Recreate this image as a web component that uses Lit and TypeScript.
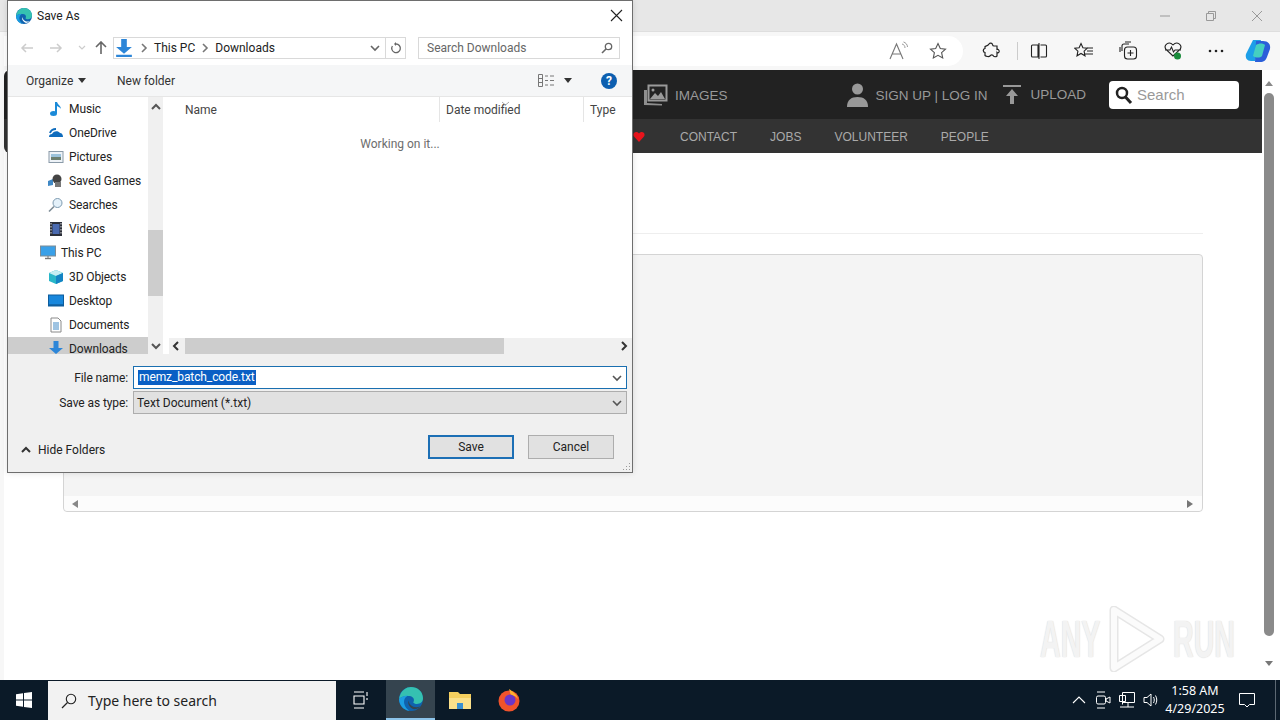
import { LitElement, css, html, svg } from 'lit';
import { customElement } from 'lit/decorators.js';

const chevron = (rot: number, color = '#555', weight = 1.6) => html`<svg width="10" height="10" viewBox="0 0 10 10" style="transform:rotate(${rot}deg)"><path d="M1 3l4 4 4-4" fill="none" stroke=${color} stroke-width=${weight}/></svg>`;

const edge = (size: number, hole: string) => html`<svg width=${size} height=${size} viewBox="0 0 16 16"><circle cx="8" cy="8" r="8" fill="#0f62ae"/><path d="M0 8C1 2 5 0 8 0c4.500 0 8 3.200 8 7.500 0 2.500-2 3.800-4 3.800-1.200 0-2.200-.4-2.500-1 1-1.500.5-4-2.500-4.300C4 5.700 1.500 6.500 0 8z" fill="#35c1b1"/><path d="M0 8c1.500-1.500 4-2.300 6-2.300-2 1-3 3-2.500 5.500.4 2 2 3.800 3.500 4.700C3 15.500 0 12 0 8z" fill="#1b9de2"/><path d="M6.500 9c0 2.500 2.300 4.500 5 4.500 1 0 1.800-.2 2.500-.6l-1 1.100c-1 .5-2 .8-3 .9C7.500 14 5.300 11.500 6.500 9z" fill=${hole}/></svg>`;

const treeIcons: Record<string, unknown> = {
  music: svg`<path d="M8 1v11" stroke="#1b8ad8" stroke-width="2"/><ellipse cx="5.500" cy="12.500" rx="3.500" ry="2.500" fill="#1b8ad8"/><path d="M9 1c1 3 4 4 4 7-1-2-3-2-4-3z" fill="#1b8ad8"/>`,
  cloud: svg`<path d="M1 12c0-2 1-3 3-3 1-3 6-4 8-1 2 0 3 2 3 4z" fill="#0f6cbd"/><path d="M2 8c1-3 3-4 6-4" stroke="#0f6cbd" stroke-width="2" fill="none"/>`,
  pictures: svg`<rect x="1" y="2.500" width="14" height="11" fill="#eef3f8" stroke="#8a9aa8"/><rect x="3" y="5" width="10" height="3" fill="#9cc3dc"/><rect x="3" y="8" width="10" height="3" fill="#6c7f70"/>`,
  games: svg`<path d="M0 8l5-2v6l-5 1z" fill="#3f88c5"/><circle cx="9" cy="6" r="4.500" fill="#444"/><path d="M7 9h6v5H7z" fill="#777"/>`,
  search: svg`<circle cx="9.500" cy="6" r="4.500" fill="#e4f1fa" stroke="#7d9ab0"/><path d="M6 9.500L1 14.500" stroke="#7d8c96" stroke-width="1.600"/>`,
  video: svg`<rect x="2" y="1" width="12" height="14" fill="#2b2f3a"/><rect x="4.500" y="3" width="7" height="10" fill="#4a6ab0"/><path d="M3 2v12M13 2v12" stroke="#ddd" stroke-dasharray="1.500 1.500"/>`,
  pc: svg`<rect x="0.500" y="1" width="15" height="10" fill="#3aa0e8" stroke="#7d8c96"/><path d="M5 13.500h6" stroke="#777" stroke-width="1.400"/><path d="M8 11v2" stroke="#777"/>`,
  cube: svg`<path d="M8 1l7 3v8l-7 3-7-3V4z" fill="#28b6c8"/><path d="M1 4l7 3 7-3-7-3z" fill="#c5eef3"/><path d="M8 7v8l7-3V4z" fill="#1484c4"/>`,
  desktop: svg`<rect x="0.500" y="2" width="15" height="11" fill="#1887dc" stroke="#0d5c9c"/><path d="M1 12h14" stroke="#0d4a80"/>`,
  docs: svg`<path d="M3 1h7l3 3v11H3z" fill="#fff" stroke="#8a8a8a"/><path d="M5 6h6M5 8h6M5 10h6M5 12h6" stroke="#3f88c5"/>`,
  down: svg`<path d="M5.500 0h5v7h4.500L8 13 1 7h4.500z" fill="#2d86d8"/><path d="M1 14h14v2H1z" fill="#2d86d8"/>`,
};

const tree = [
  ['Music', 'music', 1], ['OneDrive', 'cloud', 1], ['Pictures', 'pictures', 1], ['Saved Games', 'games', 1],
  ['Searches', 'search', 1], ['Videos', 'video', 1], ['This PC', 'pc', 0], ['3D Objects', 'cube', 1],
  ['Desktop', 'desktop', 1], ['Documents', 'docs', 1], ['Downloads', 'down', 1],
] as const;

@customElement('save-dialog')
class SaveDialog extends LitElement {
  static styles = css`
    :host {
      position: absolute; left: 7px; top: 0; width: 626px; height: 473px; box-sizing: border-box;
      border: 1px solid #6e6e6e; background: #fff; display: flex; flex-direction: column;
      font: 12px Roboto, 'Noto Sans', sans-serif; color: #222; box-shadow: 0 0 6px rgba(0,0,0,.12);
    }
    .title { height: 29px; display: flex; align-items: center; padding-left: 8px; gap: 5px; flex: none; }
    .title .x { margin-left: auto; margin-right: 9px; display: flex; }
    .nav { height: 35px; flex: none; display: flex; align-items: center; box-sizing: border-box; padding: 0 12px; color: #bbb; }
    .nav .arrows { display: flex; align-items: center; width: 94px; gap: 15px; }
    .nav .arrows .up { margin-left: -6px; }
    .addr { width: 270px; height: 20px; border: 1px solid #d9d9d9; display: flex; align-items: center; gap: 5px; padding-left: 1px; box-sizing: content-box; color: #222; flex: none; }
    .addr .loc { margin-right: 1px; }
    .addr .end { margin-left: auto; margin-right: 5px; display: flex; align-items: center; }
    .refresh { width: 19px; height: 20px; border: 1px solid #d9d9d9; display: flex; align-items: center; justify-content: center; margin-left: -1px; flex: none; }
    .search { margin-left: 12px; width: 186px; height: 20px; border: 1px solid #d9d9d9; display: flex; align-items: center; padding: 0 6px 0 8px; color: #666; justify-content: space-between; flex: none; }
    .tools { height: 32px; flex: none; background: #f5f6f7; border-bottom: 1px solid #e6e6e6; display: flex; align-items: center; padding: 0 15px 0 18px; color: #333; box-sizing: border-box; }
    .tools .org { display: flex; align-items: center; gap: 5px; width: 91px; }
    .caret { width: 0; height: 0; border: 4px solid transparent; border-top: 5px solid #333; border-bottom: 0; }
    .tools .right { margin-left: auto; display: flex; align-items: center; }
    .tools .right .caret { margin-left: 9px; }
    .help { width: 16px; height: 16px; border-radius: 50%; background: #0d5fb0; color: #fff; font-weight: 700; font-size: 12px; line-height: 16px; text-align: center; margin-left: 29px; }
    .panes { height: 257px; flex: none; display: flex; }
    .tree { width: 140px; overflow: hidden; flex: none; }
    .row { height: 24px; display: flex; align-items: center; gap: 5px; padding-left: 40px; box-sizing: border-box; white-space: nowrap; letter-spacing: -.1px; }
    .row.top { padding-left: 32px; }
    .row.sel { background: #cdcdcd; }
    .row svg { flex: none; }
    .vbar { width: 15px; flex: none; background: #f0f0f0; display: flex; flex-direction: column; align-items: center; position: relative; justify-content: space-between; padding: 5px 0 3px; box-sizing: border-box; }
    .vbar .thumb { position: absolute; left: 0; right: 0; top: 133px; height: 66px; background: #cdcdcd; }
    .list { flex: 1; display: flex; flex-direction: column; min-width: 0; padding-left: 7px; }
    .head { height: 25px; flex: none; display: flex; color: #444; }
    .head div { box-sizing: border-box; padding: 6px 0 0 6px; border-right: 1px solid #e5e5e5; position: relative; }
    .head .n { width: 270px; padding-left: 15px; }
    .head .d { width: 144px; }
    .head .t { border-right: 0; flex: 1; }
    .head .sort { position: absolute; top: -2px; left: 61px; padding: 0; border: 0; }
    .work { flex: 1; text-align: center; color: #6d6d6d; padding: 15px 2px 0 0; }
    .hbar { height: 16px; flex: none; margin-left: -1px; background: #f0f0f0; display: flex; align-items: center; justify-content: space-between; padding: 0 3px 0 2px; position: relative; }
    .hbar .thumb { position: absolute; left: 16px; width: 319px; top: 0; bottom: 0; background: #cdcdcd; }
    .hbar span { display: flex; }
    .bottom { flex: 1; background: #f0f0f0; padding: 12px 5px 0 0; position: relative; }
    .field { display: grid; grid-template-columns: 120px 494px; column-gap: 5px; align-items: center; margin-bottom: 2px; }
    .field label { text-align: right; letter-spacing: -.1px; }
    .input { height: 23px; box-sizing: border-box; border: 1px solid #1a6fb0; background: #fff; display: flex; align-items: center; justify-content: space-between; padding: 0 4px; }
    .input.sel { border-color: #adadad; background: #e1e1e1; padding-left: 3px; }
    .input mark { background: #0a5fc4; color: #fff; padding: 0 1px; line-height: 15px; letter-spacing: -.1px; }
    .actions { display: flex; align-items: center; margin-top: 21px; padding-left: 13px; }
    .hide { display: flex; align-items: center; gap: 7px; margin-top: 5px; }
    .btn { width: 86px; height: 24px; box-sizing: border-box; border: 1px solid #adadad; background: #e1e1e1; display: flex; align-items: center; justify-content: center; }
    .btn.def { border: 2px solid #1c6fb5; margin-left: auto; margin-right: 14px; }
    .btn.cancel { margin-right: 13px; }
    .grip { position: absolute; right: 1px; bottom: 1px; }
  `;

  render() {
    return html`
      <div class="title">
        ${edge(16, '#fff')}
        <span>Save As</span>
        <span class="x"><svg width="13" height="13" viewBox="0 0 13 13"><path d="M1 1l11 11M12 1L1 12" stroke="#222" stroke-width="1.100"/></svg></span>
      </div>
      <div class="nav">
        <div class="arrows">
          <svg width="14" height="12" viewBox="0 0 14 12"><path d="M13 6H2M6 2L2 6l4 4" fill="none" stroke="#ccc" stroke-width="1.500"/></svg>
          <svg width="14" height="12" viewBox="0 0 14 12"><path d="M1 6h11M8 2l4 4-4 4" fill="none" stroke="#ccc" stroke-width="1.500"/></svg>
          <svg width="8" height="6" viewBox="0 0 8 6"><path d="M1 1l3 3 3-3" fill="none" stroke="#ccc" stroke-width="1.200"/></svg>
          <svg class="up" width="12" height="13" viewBox="0 0 12 13"><path d="M6 13V2M1 6l5-5 5 5" fill="none" stroke="#666" stroke-width="1.600"/></svg>
        </div>
        <div class="addr">
          <svg class="loc" width="18" height="18" viewBox="0 0 16 16"><path d="M5.500 0h5v7h4.500L8 13 1 7h4.500z" fill="#2d86d8"/><path d="M1 14h14v2H1z" fill="#2d86d8"/></svg>
          ${chevron(-90, '#777')}<span>This PC</span>${chevron(-90, '#777')}<span>Downloads</span>
          <span class="end">${chevron(0, '#666')}</span>
        </div>
        <div class="refresh"><svg width="12" height="12" viewBox="0 0 12 12"><path d="M6 2a4.300 4.300 0 1 1-3.600 2" fill="none" stroke="#666" stroke-width="1.300"/><path d="M6 0v4L4 2z" fill="#666"/></svg></div>
        <div class="search"><span>Search Downloads</span><svg width="12" height="12" viewBox="0 0 12 12"><circle cx="7.500" cy="4.500" r="3.200" fill="none" stroke="#666" stroke-width="1.300"/><path d="M5 7l-4 4" stroke="#666" stroke-width="1.600"/></svg></div>
      </div>
      <div class="tools">
        <div class="org"><span>Organize</span><i class="caret"></i></div>
        <span>New folder</span>
        <div class="right">
          <svg width="17" height="13" viewBox="0 0 17 13"><path d="M.5.5h4v12h-4zM.5 4.500h4M.5 8.500h4M7 2h3M12 2h4M7 6.500h3M12 6.500h4M7 11h3M12 11h4" fill="none" stroke="#777"/></svg>
          <i class="caret"></i>
          <div class="help">?</div>
        </div>
      </div>
      <div class="panes">
        <div class="tree">
          ${tree.map(([name, icon, indent]) => html`<div class="row ${indent ? '' : 'top'} ${name === 'Downloads' ? 'sel' : ''}"><svg width="16" height="16" viewBox="0 0 16 16">${treeIcons[icon]}</svg><span>${name}</span></div>`)}
        </div>
        <div class="vbar">${chevron(180, '#555', 2)}<div class="thumb"></div>${chevron(0, '#555', 2)}</div>
        <div class="list">
          <div class="head">
            <div class="n">Name</div>
            <div class="d">Date modified<div class="sort"><svg width="9" height="5" viewBox="0 0 9 5"><path d="M1 1l3.500 3L8 1" fill="none" stroke="#aaa"/></svg></div></div>
            <div class="t">Type</div>
          </div>
          <div class="work">Working on it...</div>
          <div class="hbar"><span>${chevron(90, '#333', 2)}</span><div class="thumb"></div><span>${chevron(-90, '#333', 2)}</span></div>
        </div>
      </div>
      <div class="bottom">
        <div class="field"><label>File name:</label><div class="input"><mark>memz_batch_code.txt</mark>${chevron(0)}</div></div>
        <div class="field"><label>Save as type:</label><div class="input sel"><span>Text Document (*.txt)</span>${chevron(0)}</div></div>
        <div class="actions">
          <div class="hide">${chevron(180, '#333', 2)}<span>Hide Folders</span></div>
          <div class="btn def">Save</div>
          <div class="btn cancel">Cancel</div>
        </div>
        <svg class="grip" width="9" height="9" viewBox="0 0 9 9"><path d="M7 1h1v1H7zM4 4h1v1H4zM7 4h1v1H7zM1 7h1v1H1zM4 7h1v1H4zM7 7h1v1H7z" fill="#9a9a9a"/></svg>
      </div>
    `;
  }
}

@customElement('app-root')
export class AppRoot extends LitElement {
  static styles = css`
    :host { display: flex; flex-direction: column; position: relative; width: 1280px; height: 720px; overflow: hidden; font-family: 'Liberation Sans', Arial, sans-serif; background: #fff; }
    .browser { height: 680px; flex: none; display: flex; flex-direction: column; background: #f7f7f7; }
    .titlebar { height: 32px; flex: none; box-sizing: border-box; border-bottom: 1px solid #dedede; background: #e7e7e7; display: flex; justify-content: flex-end; align-items: center; color: #8a8a8a; gap: 34px; padding-right: 17px; }
    .titlebar svg { display: block; }
    .toolbar { height: 38px; flex: none; display: flex; align-items: center; background: #f7f7f7; }
    .pill { margin-left: 4px; width: 959px; height: 30px; background: #fff; border-radius: 0 15px 15px 0; display: flex; align-items: center; justify-content: flex-end; padding-right: 16px; gap: 20px; box-sizing: border-box; flex: none; }
    .tb { display: flex; align-items: center; }
    .tb svg { display: block; }
    .ext { margin-left: 19px; }
    .divider { width: 1px; height: 18px; background: #ccc; margin-left: 17px; flex: none; }
    .split { margin-left: 12px; }
    .fav { margin-left: 26px; }
    .coll { margin-left: 25px; }
    .health { margin-left: 24px; }
    .dots { margin-left: 25px; }
    .copilot { margin-left: 21px; }
    .view { flex: 1; display: flex; min-height: 0; padding-left: 4px; background: #f7f7f7; }
    .page { flex: 1; background: #fff; display: flex; flex-direction: column; min-width: 0; }
    .hdr { height: 49px; flex: none; background: #222; border-radius: 6px 0 0 0; display: flex; align-items: center; color: #999; font-size: 13.500px; padding-left: 639px; padding-right: 23px; }
    .hdr .item { display: flex; align-items: center; }
    .images { gap: 7px; }
    .images span, .sign span { margin-top: 1px; }
    .sign { gap: 8px; margin-left: 119px; }
    .upload { gap: 10px; margin-left: 15px; }
    .sub { height: 34px; flex: none; background: #333; border-radius: 0 0 0 6px; display: flex; align-items: center; font-size: 12px; color: #aaa; padding: 1px 0 0 629px; gap: 33px; box-sizing: border-box; }
    .sub svg { display: block; margin-right: 2px; }
    .searchbox { width: 130px; height: 28px; background: #fff; border-radius: 4px; margin-left: auto; display: flex; align-items: center; gap: 4px; padding-left: 6px; box-sizing: border-box; color: #999; font-size: 15px; }
    .content { flex: 1; padding: 80px 59px 0 59px; display: flex; flex-direction: column; }
    .rule { height: 1px; background: #eee; flex: none; margin-bottom: 20px; }
    .box { height: 258px; box-sizing: border-box; border: 1px solid #d4d4d4; border-radius: 4px; background: #f4f4f4; display: flex; flex-direction: column; justify-content: flex-end; flex: none; }
    .boxbar { height: 15px; background: #fcfcfc; display: flex; align-items: center; justify-content: space-between; padding: 0 9px 0 8px; border-radius: 0 0 4px 4px; }
    .tri { width: 0; height: 0; border: 4px solid transparent; }
    .tri.l { border-right: 6px solid #888; border-left: 0; }
    .tri.r { border-left: 6px solid #777; border-right: 0; }
    .tri.u { border-bottom: 5px solid #888; border-top: 0; }
    .tri.d { border-top: 5px solid #777; border-bottom: 0; margin-top: 25px; }
    .scroll { width: 18px; flex: none; background: #fff; display: flex; flex-direction: column; align-items: center; padding: 11px 4px 0 0; box-sizing: border-box; }
    .scroll .thumb { width: 10px; height: 543px; background: #8a8a8a; border-radius: 5px; margin-top: 7px; flex: none; }
    .mark { position: absolute; left: 1040px; top: 606px; display: flex; align-items: center; gap: 8px; color: #f3f3f3; font: 700 52px 'Liberation Sans', sans-serif; text-shadow: 0 0 1px #ddd, 0 0 2px #e4e4e4; }
    .mark span { width: 60px; display: block; transform: scaleX(.55); transform-origin: left; white-space: nowrap; }
    .mark svg { flex: none; }
    .task { height: 40px; flex: none; background: #0b1a28; display: flex; align-items: center; color: #fff; }
    .start { width: 48px; display: flex; justify-content: center; }
    .tsearch { width: 288px; height: 39px; margin-top: 1px; background: #f2f2f2; display: flex; align-items: center; gap: 11px; padding-left: 13px; box-sizing: border-box; color: #222; font: 14px 'Noto Sans', sans-serif; flex: none; }
    .ticon { width: 49px; height: 40px; display: flex; align-items: center; justify-content: center; box-sizing: border-box; flex: none; }
    .ticon.first { width: 50px; }
    .ticon.on { background: #35444f; border-bottom: 2px solid #8cc4ea; }
    .tray { margin-left: auto; display: flex; align-items: center; gap: 8px; padding-right: 4px; height: 40px; }
    .tray .up { margin-right: 1px; }
    .clock { font: 12.500px/18px 'Noto Sans', sans-serif; text-align: center; width: 60px; margin: 0 6px 0 -2px; white-space: nowrap; display: flex; flex-direction: column; align-items: center; }
    .notif { margin-right: 12px; }
    .peek { width: 1px; height: 40px; background: #5c6873; flex: none; }
    .tray svg { display: block; }
  `;

  render() {
    return html`
      <div class="browser">
        <div class="titlebar">
          <svg width="12" height="12" viewBox="0 0 12 12"><path d="M1 6h10" stroke="#999"/></svg>
          <svg width="12" height="12" viewBox="0 0 12 12"><path d="M1.500 3.500h7v7h-7zM3.500 3.500v-2h7v7h-2" fill="none" stroke="#999"/></svg>
          <svg width="12" height="12" viewBox="0 0 12 12"><path d="M1 1l10 10M11 1L1 11" stroke="#999"/></svg>
        </div>
        <div class="toolbar">
          <div class="pill">
            <svg width="20" height="20" viewBox="0 0 20 20"><path d="M1 18L7.500 3 14 18M3.500 13h8" fill="none" stroke="#777" stroke-width="1.100"/><path d="M13 3c2 .5 3 2 3 4M14.500 1c2 .5 4 2.500 4 5" fill="none" stroke="#999"/></svg>
            <svg width="18" height="18" viewBox="0 0 18 18"><path d="M9 1.500l2.300 5 5.200.6-3.900 3.500 1.100 5.400L9 13.300 4.300 16l1.100-5.400L1.500 7.100l5.200-.6z" fill="none" stroke="#555" stroke-width="1.100"/></svg>
          </div>
          <div class="tb ext"><svg width="18" height="18" viewBox="0 0 18 18"><path d="M7 2c1-1.300 3-1 3.500.5.400 1 0 1.500 1.500 1.500h3v3.500c1.500-.5 2.500 1 2 2.500-.5 1-1.500 1-2 .5v3.500c-1 1-3 1-3.500 0-.5-1.500-3-1.500-3.500 0-1 1-4 .5-5-.5v-3c-2-.2-2.500-3.500 0-4V4.500C4 4 6 4 7 2z" fill="none" stroke="#222" stroke-width="1.200"/></svg></div>
          <div class="divider"></div>
          <div class="tb split"><svg width="18" height="18" viewBox="0 0 18 18"><path d="M8 3H2.500A1 1 0 0 0 1.500 4v10a1 1 0 0 0 1 1H8zM9 1v16M10.500 3h5a1 1 0 0 1 1 1v10a1 1 0 0 1-1 1h-5" fill="none" stroke="#222" stroke-width="1.100"/></svg></div>
          <div class="tb fav"><svg width="20" height="18" viewBox="0 0 20 18"><path d="M7 1.500l1.900 4.200 4.400.5-3.200 3 .9 4.600L7 11.500 3 13.800l.9-4.600-3.200-3 4.400-.5zM13 6h6M13 9h6M11 12h8" fill="none" stroke="#222" stroke-width="1.100"/></svg></div>
          <div class="tb coll"><svg width="20" height="20" viewBox="0 0 20 20"><path d="M3 10V5a2 2 0 0 1 2-2h5M1 11V6M6 1h6" fill="none" stroke="#222" stroke-width="1.100"/><rect x="5.500" y="6" width="12" height="12" rx="3" fill="none" stroke="#222" stroke-width="1.100"/><path d="M11.500 9v6M8.500 12h6" stroke="#222" stroke-width="1.100"/></svg></div>
          <div class="tb health"><svg width="20" height="20" viewBox="0 0 20 20"><path d="M10 15L3 8.500C0 4 6-.5 10 4c4-4.500 10 0 7 4.500zM2 9h5l1.500-3 2 5L12 9h6" fill="none" stroke="#222" stroke-width="1.100"/><circle cx="14.500" cy="15" r="3.500" fill="#1a8c3c"/></svg></div>
          <div class="tb dots"><svg width="16" height="4" viewBox="0 0 16 4"><circle cx="2" cy="2" r="1.300" fill="#222"/><circle cx="8" cy="2" r="1.300" fill="#222"/><circle cx="14" cy="2" r="1.300" fill="#222"/></svg></div>
          <div class="tb copilot"><svg width="26" height="26" viewBox="0 0 26 26"><path d="M8 2h8l-6 21H6C2 23 0 20 1 16z" fill="#1d9fe8"/><path d="M11 3h7c5 0 8 3 7 8l-3 8c-1 3-3 5-7 5h-5z" fill="#2b5fd9"/><path d="M11 7c3-2 7-2 9 0l-3 11c-2 2-6 2-9 0z" fill="#45cfc0"/></svg></div>
        </div>
        <div class="view">
          <div class="page">
            <div class="hdr">
              <div class="item images">
                <svg width="25" height="22" viewBox="0 0 25 22"><path d="M1 6h3v13l15 1v1.500L1 21z" fill="#8f8f8f"/><path d="M5.500 1.500l18 0v15h-18z" fill="#222" stroke="#9a9a9a" stroke-width="2"/><path d="M7 15l5-6 3 3 3-4 4 7z" fill="#9a9a9a"/><circle cx="10" cy="6" r="1.500" fill="#9a9a9a"/></svg>
                <span>IMAGES</span>
              </div>
              <div class="item sign">
                <svg width="21" height="24" viewBox="0 0 21 24"><circle cx="10.500" cy="6" r="5.500" fill="#999"/><path d="M0 24c0-7 4-10 10.500-10S21 17 21 24z" fill="#999"/></svg>
                <span>SIGN UP | LOG IN</span>
              </div>
              <div class="item upload">
                <svg width="18" height="20" viewBox="0 0 18 20"><path d="M0 0h18v2H0zM9 4l6 7h-4v8H7v-8H3z" fill="#999"/></svg>
                <span>UPLOAD</span>
              </div>
              <div class="searchbox">
                <svg width="18" height="20" viewBox="0 0 18 20"><circle cx="7" cy="8" r="5" fill="none" stroke="#222" stroke-width="2.500"/><path d="M10.500 12l5.500 6" stroke="#222" stroke-width="3"/></svg>
                <span>Search</span>
              </div>
            </div>
            <div class="sub">
              <svg width="12" height="11" viewBox="0 0 12 11"><path d="M6 11L1 5.500C-1 2 3-1 6 2.500 9-1 13 2 11 5.500z" fill="#e8141c"/></svg>
              <span>CONTACT</span><span>JOBS</span><span>VOLUNTEER</span><span>PEOPLE</span>
            </div>
            <div class="content">
              <div class="rule"></div>
              <div class="box">
                <div class="boxbar"><i class="tri l"></i><i class="tri r"></i></div>
              </div>
            </div>
          </div>
          <div class="scroll">
            <i class="tri u"></i>
            <div class="thumb"></div>
            <i class="tri d"></i>
          </div>
        </div>
      </div>
      <div class="task">
        <div class="start"><svg width="16" height="16" viewBox="0 0 16 16"><path d="M0 2.200l7-1V7.500H0zM8 1l8-1v7.500H8zM0 8.500h7v6.300l-7-1zM8 8.500h8V16l-8-1.100z" fill="#fff"/></svg></div>
        <div class="tsearch"><svg width="16" height="16" viewBox="0 0 16 16"><circle cx="10" cy="6" r="4.700" fill="none" stroke="#222" stroke-width="1.100"/><path d="M6.500 9.500L1 15" stroke="#222" stroke-width="1.300"/></svg><span>Type here to search</span></div>
        <div class="ticon first"><svg width="16" height="18" viewBox="0 0 16 18"><path d="M1 1h10M1 17h10M1 5h10v8H1zM14 1v4M14 7v2" fill="none" stroke="#fff" stroke-width="1.100"/></svg></div>
        <div class="ticon on">${edge(24, '#35444f')}</div>
        <div class="ticon"><svg width="22" height="20" viewBox="0 0 22 20"><path d="M0 2h9l2 2h11v15H0z" fill="#f5cf5e"/><path d="M0 8h22v11H0z" fill="#fbe08a"/><rect x="8" y="13" width="6" height="6" fill="#3a8fd0"/></svg></div>
        <div class="ticon"><svg width="24" height="24" viewBox="0 0 24 24"><circle cx="12" cy="13" r="10.500" fill="#f0532c"/><path d="M12 1c3 2 8 5 9 10-2-3-5-4-7-3z" fill="#ffb02e"/><circle cx="13" cy="12" r="5.500" fill="#6a36c9"/></svg></div>
        <div class="tray">
          <svg class="up" width="14" height="8" viewBox="0 0 14 8"><path d="M1 7l6-6 6 6" fill="none" stroke="#fff" stroke-width="1.100"/></svg>
          <svg width="16" height="18" viewBox="0 0 16 18"><path d="M2 1h8M2 17h8" stroke="#fff"/><rect x="1.500" y="5" width="9" height="8" rx="1.500" fill="none" stroke="#fff"/><path d="M11 8l4-2v6l-4-2z" fill="none" stroke="#fff"/></svg>
          <svg width="16" height="16" viewBox="0 0 16 16"><path d="M3.500.5h12v10h-12zM.5 3.500h6v6h-6zM3.500 9.500v3M1 15h14M9 10.500V15" fill="none" stroke="#fff"/></svg>
          <svg width="16" height="16" viewBox="0 0 16 16"><path d="M1 5.500h3L8 2v12L4 10.500H1zM10.500 5c1 2 1 4 0 6M12.500 3.500c1.700 3 1.700 6 0 9" fill="none" stroke="#fff"/></svg>
          <div class="clock"><div>1:58 AM</div><div>4/29/2025</div></div>
          <svg class="notif" width="16" height="16" viewBox="0 0 16 16"><path d="M.5 1.500h15v11h-5L8 15l-2.500-2.500h-5z" fill="none" stroke="#fff"/></svg>
          <div class="peek"></div>
        </div>
      </div>
      <div class="mark"><span>ANY</span><svg width="57" height="66" viewBox="0 0 57 66"><path d="M6 4l46 29L6 62z" fill="none" stroke="#e6e6e6" stroke-width="9" stroke-linejoin="round"/><path d="M6 4l46 29L6 62z" fill="none" stroke="#fbfbfb" stroke-width="6" stroke-linejoin="round"/></svg><span>RUN</span></div>
      <save-dialog></save-dialog>
    `;
  }
}
